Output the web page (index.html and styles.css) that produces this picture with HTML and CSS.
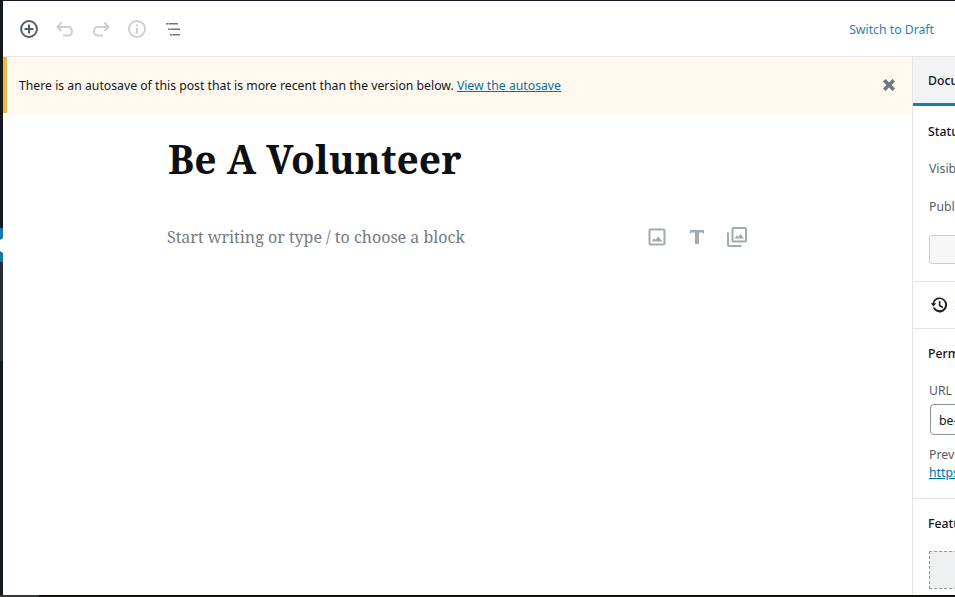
FILE: index.html
```html
<!DOCTYPE html>
<html lang="en">
<head>
<meta charset="utf-8">
<title>Be A Volunteer</title>
<link rel="stylesheet" href="styles.css">
</head>
<body>
<div class="screen">
  <div class="top-edge"></div>
  <div class="middle">
    <div class="left-edge">
      <div class="edge-dark"></div>
      <div class="edge-blue"></div>
      <div class="edge-slate"></div>
      <div class="edge-fill"></div>
    </div>
    <div class="app">
      <header class="toolbar">
        <div class="tools">
          <svg class="tool" viewBox="0 0 20 20"><circle cx="10" cy="10" r="7.900" fill="none" stroke="#555d66" stroke-width="2"/><path d="M10 5.500v9M5.500 10h9" stroke="#555d66" stroke-width="2"/></svg>
          <svg class="tool" viewBox="0 0 20 20"><path d="M6.500 3.500 2.500 8l4 4M3 8h10c2.500 0 4 1.700 4 4.200s-1.500 4.300-4 4.300H8" fill="none" stroke="#ccd0d4" stroke-width="2"/></svg>
          <svg class="tool" viewBox="0 0 20 20"><path d="M13.500 3.500l4 4.500-4 4M17 8H7c-2.500 0-4 1.700-4 4.200s1.500 4.300 4 4.300h5" fill="none" stroke="#ccd0d4" stroke-width="2"/></svg>
          <svg class="tool" viewBox="0 0 20 20"><circle cx="10" cy="10" r="8" fill="none" stroke="#ccd0d4" stroke-width="2"/><path d="M9 9h2v5.500H9zM9 5.500h2v2H9z" fill="#ccd0d4"/></svg>
          <svg class="tool" viewBox="0 0 20 20"><path d="M3 4h2v1.500H3zM5.500 4H15v1.500H5.500zM5 9.500h2V11H5zM7.500 9.500H17V11H7.500zM7 15h2v1.500H7zM9.500 15H17v1.500H9.500z" fill="#6c7781"/></svg>
        </div>
        <a class="switch" href="#">Switch to Draft</a>
      </header>
      <div class="body">
        <main class="editor">
          <div class="notice">
            <p class="notice-text">There is an autosave of this post that is more recent than the version below. <a href="#">View the autosave</a></p>
            <svg class="notice-close" viewBox="0 0 12 12"><path d="M1.500 3.400 3.400 1.500 6 4.100l2.600-2.600 1.900 1.900L7.900 6l2.600 2.600-1.900 1.900L6 7.900l-2.600 2.600-1.900-1.900L4.100 6z" fill="#6c7781"/></svg>
          </div>
          <div class="canvas">
            <h1 class="post-title">Be A Volunteer</h1>
            <div class="appender">
              <span class="placeholder">Start writing or type / to choose a block</span>
              <div class="inserters">
                <svg class="ins" viewBox="0 0 20 20"><path d="M3.500 1.500h13a2 2 0 0 1 2 2v13a2 2 0 0 1-2 2h-13a2 2 0 0 1-2-2v-13a2 2 0 0 1 2-2zm0 2v13h13v-13z" fill="#a2aab2"/><path d="M4.500 14.500l2.700-3.300 1.600 1.600 2.300-3.300 4.400 5z" fill="#a2aab2"/></svg>
                <svg class="ins" viewBox="0 0 20 20"><path d="M3 3h14v3.500h-1v-.500c0-.300-.200-.500-.500-.500H12V17H8V5.500H4.500c-.300 0-.500.200-.500.500v.500H3z" fill="#a2aab2"/></svg>
                <svg class="ins" viewBox="0 0 20 20"><path d="M6.500 0h11.500a2 2 0 0 1 2 2v11.500a2 2 0 0 1-2 2H6.500a2 2 0 0 1-2-2V2a2 2 0 0 1 2-2zm0 2v11.500H18V2z" fill="#a2aab2"/><path d="M0 5.500h2V18h12.500v2H2a2 2 0 0 1-2-2z" fill="#a2aab2"/><path d="M7.500 11.500l2.500-3 1.500 1.500 2-3 3.500 4.500z" fill="#a2aab2"/></svg>
              </div>
            </div>
          </div>
        </main>
        <aside class="sidebar">
          <div class="tabs"><span class="tab">Document</span></div>
          <section class="panel panel-status">
            <h2 class="panel-title">Status &amp; visibility</h2>
            <div class="row row-visibility">Visibility</div>
            <div class="row row-publish">Publish</div>
            <div class="fake-button"></div>
          </section>
          <section class="panel panel-revisions">
            <svg class="history" viewBox="0 0 20 20"><path d="M10.800 1.800a8.200 8.200 0 1 1-7.600 11.300l1.900-.7a6.200 6.200 0 1 0-.5-4.400h2.500L3.800 11.600.9 8h1.900a8.200 8.200 0 0 1 8-6.200z" fill="#191e23"/><path d="M9.800 5.500h1.800v4.600l3.100 1.900-.9 1.500-4-2.500z" fill="#191e23"/></svg>
            <span class="rev-text">3 Revisions</span>
          </section>
          <section class="panel panel-link">
            <h2 class="panel-title">Permalink</h2>
            <div class="row row-url">URL</div>
            <div class="url-input">be-a-volunteer</div>
            <div class="row-tight row-preview">Preview</div>
            <a class="row-tight row-href" href="#">https://example.org/be-a-volunteer</a>
          </section>
          <section class="panel panel-featured">
            <h2 class="panel-title">Featured image</h2>
            <div class="image-slot"></div>
          </section>
        </aside>
      </div>
    </div>
  </div>
  <div class="bottom-edge">
    <div class="bottom-a"></div>
    <div class="bottom-b"></div>
  </div>
</div>
</body>
</html>
```
FILE: styles.css
```css
* { box-sizing: border-box; }
html, body { margin: 0; padding: 0; height: 100%; overflow: hidden; background: #fff; }
body { font-family: "Noto Sans", "Open Sans", sans-serif; font-size: 12.250px; color: #111418; }
.screen { width: 955px; height: 597px; display: flex; flex-direction: column; overflow: hidden; }
.top-edge { height: 1px; background: #12181d; flex: none; }
.middle { flex: 1; display: flex; min-height: 0; }
.bottom-edge { height: 2px; flex: none; display: flex; }
.bottom-a { width: 39px; background: #3a3638; }
.bottom-b { flex: 1; background: #1a0c0e; }

.left-edge { width: 3px; flex: none; display: flex; flex-direction: column; }
.edge-dark { height: 227px; background: #14191f; }
.edge-blue { height: 34px; background: #0b78b0; position: relative; }
.edge-blue::after { content: ""; position: absolute; left: 0; top: 10px; width: 3px; height: 15px; background: #fff; clip-path: polygon(0 2px, 100% 0, 100% 100%, 0 calc(100% - 2px)); }
.edge-slate { height: 99px; background: #272d33; }
.edge-fill { flex: 1; background: #14191f; }

.app { flex: 1; min-width: 0; display: flex; flex-direction: column; }
.toolbar { height: 56px; flex: none; display: flex; align-items: center; justify-content: space-between; border-bottom: 1px solid #e2e4e7; padding: 0 21px 0 16px; }
.tools { display: flex; align-items: center; gap: 16px; }
.tool { width: 20px; height: 20px; display: block; }
.switch { color: #2b7fb8; text-decoration: none; margin-top: 2px; }

.body { flex: 1; display: flex; min-height: 0; }
.editor { flex: 1; min-width: 0; }
.notice { height: 56px; background: #fef8ee; border-left: 4px solid #f0b849; display: flex; align-items: center; justify-content: space-between; padding: 0 15px 0 12px; }
.notice-text { margin: 0; font-size: 12.240px; }
.notice-text a { color: #0073aa; }
.notice-close { width: 16px; height: 16px; display: block; }
.canvas { padding: 21px 165px 0 164px; }
.post-title { margin: 0 0 0 1px; font-family: "Noto Serif", "DejaVu Serif", serif; font-weight: 700; font-size: 39px; line-height: 50px; height: 50px; color: #0d1013; }
.appender { margin-top: 37px; height: 32px; display: flex; align-items: center; justify-content: space-between; }
.placeholder { font-family: "Noto Serif", "DejaVu Serif", serif; font-size: 16px; color: #777b7f; }
.inserters { display: flex; gap: 20px; }
.ins { width: 20px; height: 20px; display: block; }

.sidebar { width: 43px; flex: none; border-left: 1px solid #e2e4e7; overflow: hidden; }
.tabs { height: 49px; background: #f3f3f6; border-bottom: 3px solid #0f80b5; padding: 0 0 0 15px; display: flex; align-items: center; }
.tab { white-space: nowrap; font-weight: 500; }
.panel { padding-left: 16px; border-bottom: 1px solid #e2e4e7; white-space: nowrap; width: 280px; }
.panel-title { margin: 0 0 0 -1px; font-size: 12.250px; font-weight: 500; line-height: 20px; }
.row { color: #555d66; line-height: 20px; }
.row-tight { color: #555d66; line-height: 18px; }
.panel-status { height: 176px; padding-top: 16px; }
.row-visibility { margin-top: 17px; }
.row-publish { margin-top: 18px; }
.fake-button { margin-top: 18px; width: 200px; height: 29px; background: #f7f7f7; border: 1px solid #ccd0d4; border-radius: 3px; }
.panel-revisions { height: 47px; display: flex; align-items: center; gap: 6px; }
.history { width: 18px; height: 18px; display: block; margin-left: 1px; }
.rev-text { color: #f0b849; }
.panel-link { height: 170px; padding-top: 15px; }
.row-url { margin-top: 17px; }
.url-input { margin: 3px 0 0 1px; width: 240px; height: 31px; border: 1px solid #8d96a0; border-radius: 4px; padding-left: 8px; line-height: 31px; }
.row-preview { margin-top: 11px; }
.row-href { color: #0073aa; display: block; }
.panel-featured { padding-top: 15px; border-bottom: 0; }
.image-slot { margin-top: 17px; width: 240px; height: 38px; background: #edeff0; border: 1px dashed #999; }
```
